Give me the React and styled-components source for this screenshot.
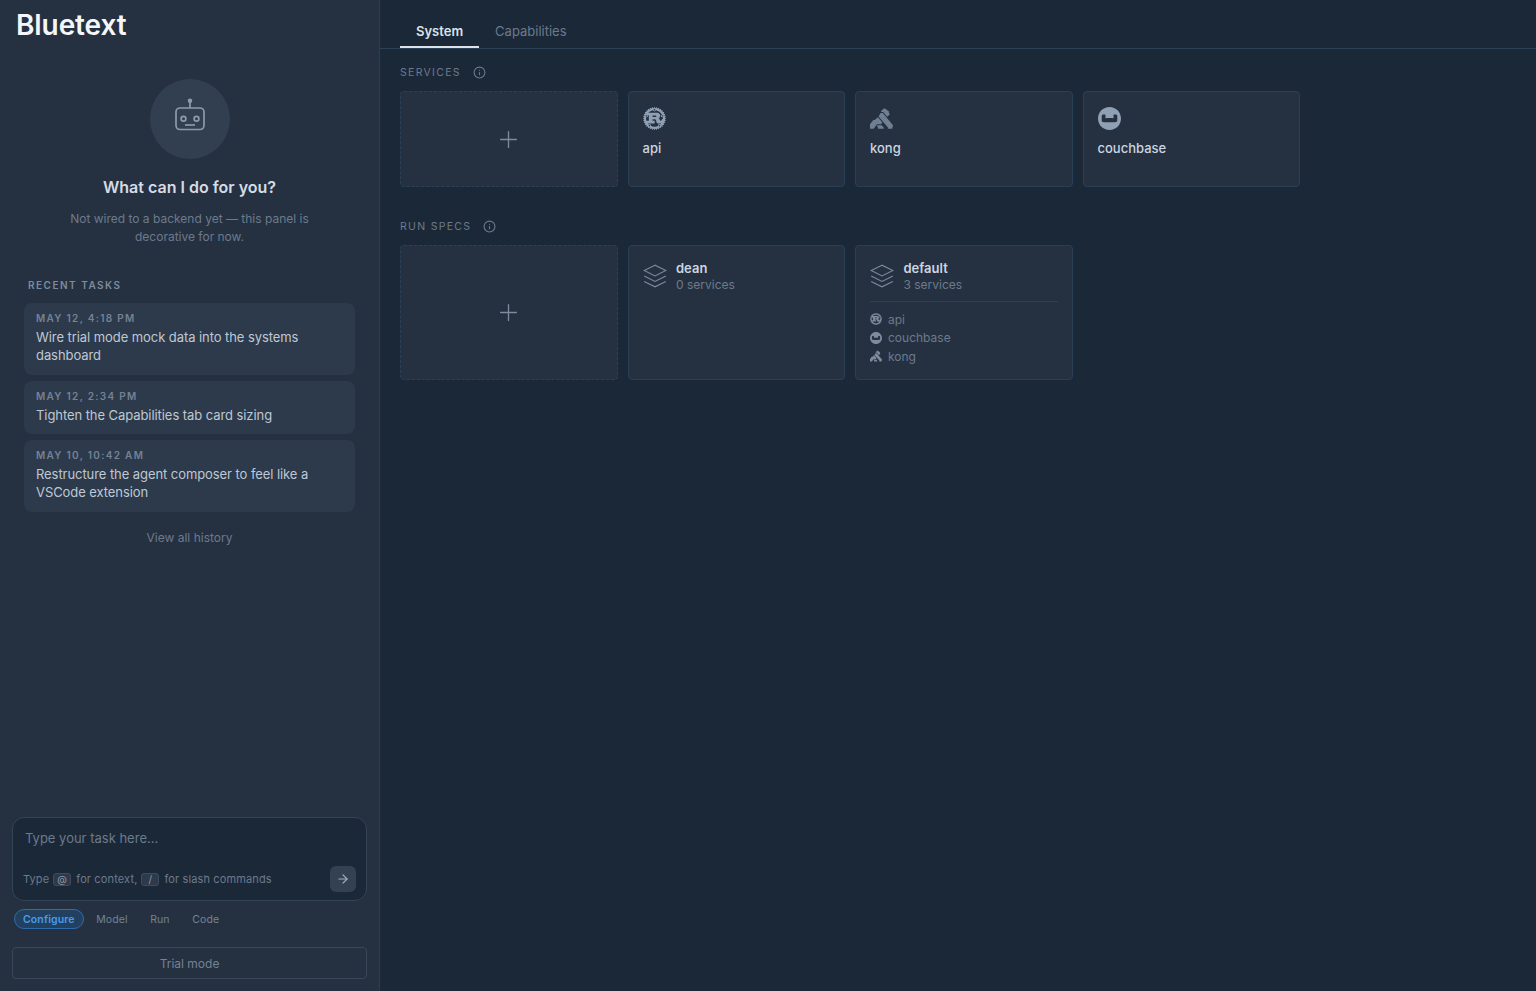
import React from 'react';
import styled, { createGlobalStyle } from 'styled-components';
import { Info, Plus, ArrowRight } from 'lucide-react';
import { SiRust, SiKong, SiCouchbase } from 'react-icons/si';

const GlobalStyle = createGlobalStyle`
  html, body {
    margin: 0;
    height: 100%;
    background: #1b2838;
    font-family: Inter, "Liberation Sans", sans-serif;
  }
  * { box-sizing: border-box; }
`;

const Shell = styled.div`
  display: flex;
  height: 991px;
  overflow: hidden;
`;

const Sidebar = styled.aside`
  width: 380px;
  flex: none;
  display: flex;
  flex-direction: column;
  background: #253141;
  border-right: 1px solid #2f3c4e;
  padding: 0 12px 12px;
`;

const Logo = styled.div`
  font-size: 28px;
  line-height: 34px;
  margin: 8px 0 0 4px;
  font-weight: 600;
  letter-spacing: -0.1px;
  color: #f4f6f9;
`;

const Intro = styled.div`
  display: flex;
  flex-direction: column;
  align-items: center;
  margin-top: 37px;
`;

const BotCircle = styled.div`
  width: 80px;
  height: 80px;
  border-radius: 50%;
  background: #323f50;
  color: #8a9bb0;
  display: flex;
  align-items: center;
  justify-content: center;
`;

const IntroTitle = styled.h2`
  margin: 17px 0 0;
  font-size: 16px;
  line-height: 22px;
  font-weight: 600;
  color: #d4dce6;
`;

const IntroText = styled.p`
  margin: 12px 0 0;
  width: 260px;
  text-align: center;
  font-size: 12px;
  line-height: 18px;
  color: #6c7a8c;
`;

const RecentLabel = styled.div`
  margin: 32px 0 0 16px;
  font-size: 10px;
  line-height: 14px;
  font-weight: 600;
  letter-spacing: 1.5px;
  color: #7d8b9d;
`;

const TaskList = styled.div`
  display: flex;
  flex-direction: column;
  gap: 6px;
  margin: 11px 12px 0;
`;

const TaskCard = styled.div`
  background: #2d3a4b;
  border-radius: 8px;
  padding: 8px 12px 10.5px;
`;

const TaskDate = styled.div`
  font-size: 10px;
  line-height: 14px;
  font-weight: 600;
  letter-spacing: 1.3px;
  color: #748295;
`;

const TaskText = styled.div`
  margin-top: 3px;
  font-size: 13px;
  line-height: 18px;
  letter-spacing: -0.07px;
  color: #bfc8d4;
`;

const HistoryLink = styled.div`
  margin-top: 18px;
  text-align: center;
  font-size: 12px;
  line-height: 16px;
  color: #6c7a8c;
`;

const Spacer = styled.div`
  flex: 1;
`;

const Composer = styled.div`
  height: 84px;
  background: #1b2838;
  border: 1px solid #354356;
  border-radius: 12px;
  padding: 11px 10px 8px 10px;
  display: flex;
  flex-direction: column;
  justify-content: space-between;
`;

const Placeholder = styled.div`
  padding-left: 2px;
  font-size: 13px;
  line-height: 18px;
  color: #6c7a8c;
`;

const ComposerFoot = styled.div`
  display: flex;
  align-items: center;
  justify-content: space-between;
`;

const Hint = styled.div`
  display: flex;
  align-items: center;
  gap: 4px;
  font-size: 11px;
  color: #6c7a8c;
  letter-spacing: 0.13px;
`;

const Key = styled.span`
  display: inline-flex;
  align-items: center;
  justify-content: center;
  width: 18px;
  height: 13px;
  margin-right: 1px;
  background: #2d3a4b;
  border: 1px solid #3d4b5e;
  border-radius: 3px;
  font-size: 10px;
  color: #8a98aa;
`;

const SendButton = styled.button`
  width: 26px;
  height: 26px;
  padding: 0;
  border: 0;
  border-radius: 6px;
  background: #344153;
  color: #a3b0c0;
  display: flex;
  align-items: center;
  justify-content: center;
`;

const ModeRow = styled.div`
  display: flex;
  align-items: center;
  margin: 8px 0 0 2px;
`;

const ModePill = styled.div`
  height: 20px;
  padding: 0 ${p => (p.$active ? 8 : 9)}px;
  margin-left: ${p => (p.$active ? 0 : 2.5)}px;
  display: flex;
  align-items: center;
  border-radius: 10px;
  font-size: 10.5px;
  letter-spacing: 0.12px;
  font-weight: ${p => (p.$active ? 600 : 400)};
  color: ${p => (p.$active ? '#4a9bea' : '#748295')};
  background: ${p => (p.$active ? '#22405f' : 'transparent')};
  border: 1px solid ${p => (p.$active ? '#2f6caa' : 'transparent')};
`;

const TrialButton = styled.div`
  margin-top: 18px;
  height: 32px;
  border: 1px solid #3a4759;
  border-radius: 4px;
  display: flex;
  align-items: center;
  justify-content: center;
  font-size: 12px;
  color: #748295;
`;

const Main = styled.main`
  flex: 1;
  min-width: 0;
`;

const TabBar = styled.div`
  height: 49px;
  padding: 15px 20px 0;
  display: flex;
  border-bottom: 1px solid #2a4058;
`;

const Tab = styled.div`
  height: 33px;
  padding: 0 16px;
  font-size: 13px;
  line-height: 32px;
  font-weight: ${p => (p.$active ? 600 : 400)};
  color: ${p => (p.$active ? '#dbe2ea' : '#6c7a8c')};
  border-bottom: 2px solid ${p => (p.$active ? '#dbe2ea' : 'transparent')};
`;

const Content = styled.div`
  padding: 16px 20px;
  width: 940px;
`;

const SectionLabel = styled.div`
  display: flex;
  align-items: center;
  gap: 12px;
  height: 14px;
  font-size: 10.5px;
  letter-spacing: 1.3px;
  color: #6c7a8c;
`;

const CardGrid = styled.div`
  display: grid;
  grid-template-columns: repeat(4, 1fr);
  gap: 10px;
  margin: 12px 0 32px;
`;

const Card = styled.div`
  height: ${p => p.$height}px;
  background: #253141;
  border: 1px solid #2a4058;
  border-radius: 4px;
  padding: 14px;
`;

const AddCard = styled(Card)`
  border-style: dashed;
  padding: 0;
  color: #7d8b9d;
  display: flex;
  align-items: center;
  justify-content: center;
`;

const ServiceIcon = styled.div`
  height: 24px;
  display: flex;
  align-items: center;
  color: ${p => p.$color};
`;

const ServiceName = styled.div`
  margin-top: 10px;
  font-size: 13px;
  line-height: 16px;
  font-weight: 500;
  color: #ccd5e0;
`;

const SpecHead = styled.div`
  display: flex;
  gap: 8.5px;
  color: #7d8b9d;
`;

const SpecIcon = styled.div`
  margin-left: -1px;
  padding-top: 2.5px;
  height: 30px;
`;

const SpecName = styled.div`
  font-size: 13px;
  line-height: 16px;
  font-weight: 600;
  color: #ccd5e0;
`;

const SpecCount = styled.div`
  margin-top: 1px;
  font-size: 12px;
  line-height: 16px;
  color: #6c7a8c;
`;

const SpecDivider = styled.div`
  height: 1px;
  margin: 8px 0 9px;
  background: #2a4058;
`;

const SpecServices = styled.div`
  display: flex;
  flex-direction: column;
  gap: 2px;
`;

const SpecService = styled.div`
  display: flex;
  align-items: center;
  gap: 6px;
  height: 16.5px;
  font-size: 12px;
  color: #6c7a8c;
`;

const SpecServiceIcon = styled.span`
  width: 12px;
  display: flex;
  color: #7d8b9d;
`;

const BotGlyph = () => (
  <svg width="44" height="44" viewBox="0 0 44 44" fill="none" stroke="currentColor" strokeWidth="1.7">
    <circle cx="22" cy="3.7" r="1.4" fill="currentColor" />
    <path d="M22 5v6" />
    <rect x="8" y="11" width="28" height="21.5" rx="4" />
    <circle cx="15.5" cy="21.7" r="2.4" />
    <circle cx="28.5" cy="21.7" r="2.4" />
    <path d="M17 28h10" />
  </svg>
);

const LayersGlyph = () => (
  <svg width="26" height="26" viewBox="0 0 24 24" fill="none" stroke="currentColor" strokeWidth="0.95">
    <polygon points="12 2 2 7 12 12 22 7 12 2" />
    <polyline points="2 17 12 22 22 17" />
    <polyline points="2 12 12 17 22 12" />
  </svg>
);

const tasks = [
  { date: 'MAY 12, 4:18 PM', text: 'Wire trial mode mock data into the systems dashboard' },
  { date: 'MAY 12, 2:34 PM', text: 'Tighten the Capabilities tab card sizing' },
  { date: 'MAY 10, 10:42 AM', text: 'Restructure the agent composer to feel like a VSCode extension' },
];

const services = [
  { name: 'api', Icon: SiRust, color: '#8fa0b5' },
  { name: 'kong', Icon: SiKong, color: '#6f8093' },
  { name: 'couchbase', Icon: SiCouchbase, color: '#8fa0b5' },
];

const defaultServices = [
  { name: 'api', Icon: SiRust },
  { name: 'couchbase', Icon: SiCouchbase },
  { name: 'kong', Icon: SiKong },
];

const modes = ['Model', 'Run', 'Code'];

export default function App() {
  return (
    <Shell>
      <GlobalStyle />
      <Sidebar>
        <Logo>Bluetext</Logo>
        <Intro>
          <BotCircle>
            <BotGlyph />
          </BotCircle>
          <IntroTitle>What can I do for you?</IntroTitle>
          <IntroText>Not wired to a backend yet — this panel is decorative for now.</IntroText>
        </Intro>
        <RecentLabel>RECENT TASKS</RecentLabel>
        <TaskList>
          {tasks.map(task => (
            <TaskCard key={task.date}>
              <TaskDate>{task.date}</TaskDate>
              <TaskText>{task.text}</TaskText>
            </TaskCard>
          ))}
        </TaskList>
        <HistoryLink>View all history</HistoryLink>
        <Spacer />
        <Composer>
          <Placeholder>Type your task here...</Placeholder>
          <ComposerFoot>
            <Hint>
              Type <Key>@</Key> for context, <Key>/</Key> for slash commands
            </Hint>
            <SendButton>
              <ArrowRight size={14} />
            </SendButton>
          </ComposerFoot>
        </Composer>
        <ModeRow>
          <ModePill $active>Configure</ModePill>
          {modes.map(mode => (
            <ModePill key={mode}>{mode}</ModePill>
          ))}
        </ModeRow>
        <TrialButton>Trial mode</TrialButton>
      </Sidebar>
      <Main>
        <TabBar>
          <Tab $active>System</Tab>
          <Tab>Capabilities</Tab>
        </TabBar>
        <Content>
          <SectionLabel>
            SERVICES <Info size={13} />
          </SectionLabel>
          <CardGrid>
            <AddCard $height={96}>
              <Plus size={27} strokeWidth={1.2} />
            </AddCard>
            {services.map(({ name, Icon, color }) => (
              <Card key={name} $height={96}>
                <ServiceIcon $color={color}>
                  <Icon size={23} />
                </ServiceIcon>
                <ServiceName>{name}</ServiceName>
              </Card>
            ))}
          </CardGrid>
          <SectionLabel>
            RUN SPECS <Info size={13} />
          </SectionLabel>
          <CardGrid>
            <AddCard $height={135}>
              <Plus size={27} strokeWidth={1.2} />
            </AddCard>
            <Card $height={135}>
              <SpecHead>
                <SpecIcon>
                  <LayersGlyph />
                </SpecIcon>
                <div>
                  <SpecName>dean</SpecName>
                  <SpecCount>0 services</SpecCount>
                </div>
              </SpecHead>
            </Card>
            <Card $height={135}>
              <SpecHead>
                <SpecIcon>
                  <LayersGlyph />
                </SpecIcon>
                <div>
                  <SpecName>default</SpecName>
                  <SpecCount>3 services</SpecCount>
                </div>
              </SpecHead>
              <SpecDivider />
              <SpecServices>
                {defaultServices.map(({ name, Icon }) => (
                  <SpecService key={name}>
                    <SpecServiceIcon>
                      <Icon size={12} />
                    </SpecServiceIcon>
                    {name}
                  </SpecService>
                ))}
              </SpecServices>
            </Card>
          </CardGrid>
        </Content>
      </Main>
    </Shell>
  );
}
